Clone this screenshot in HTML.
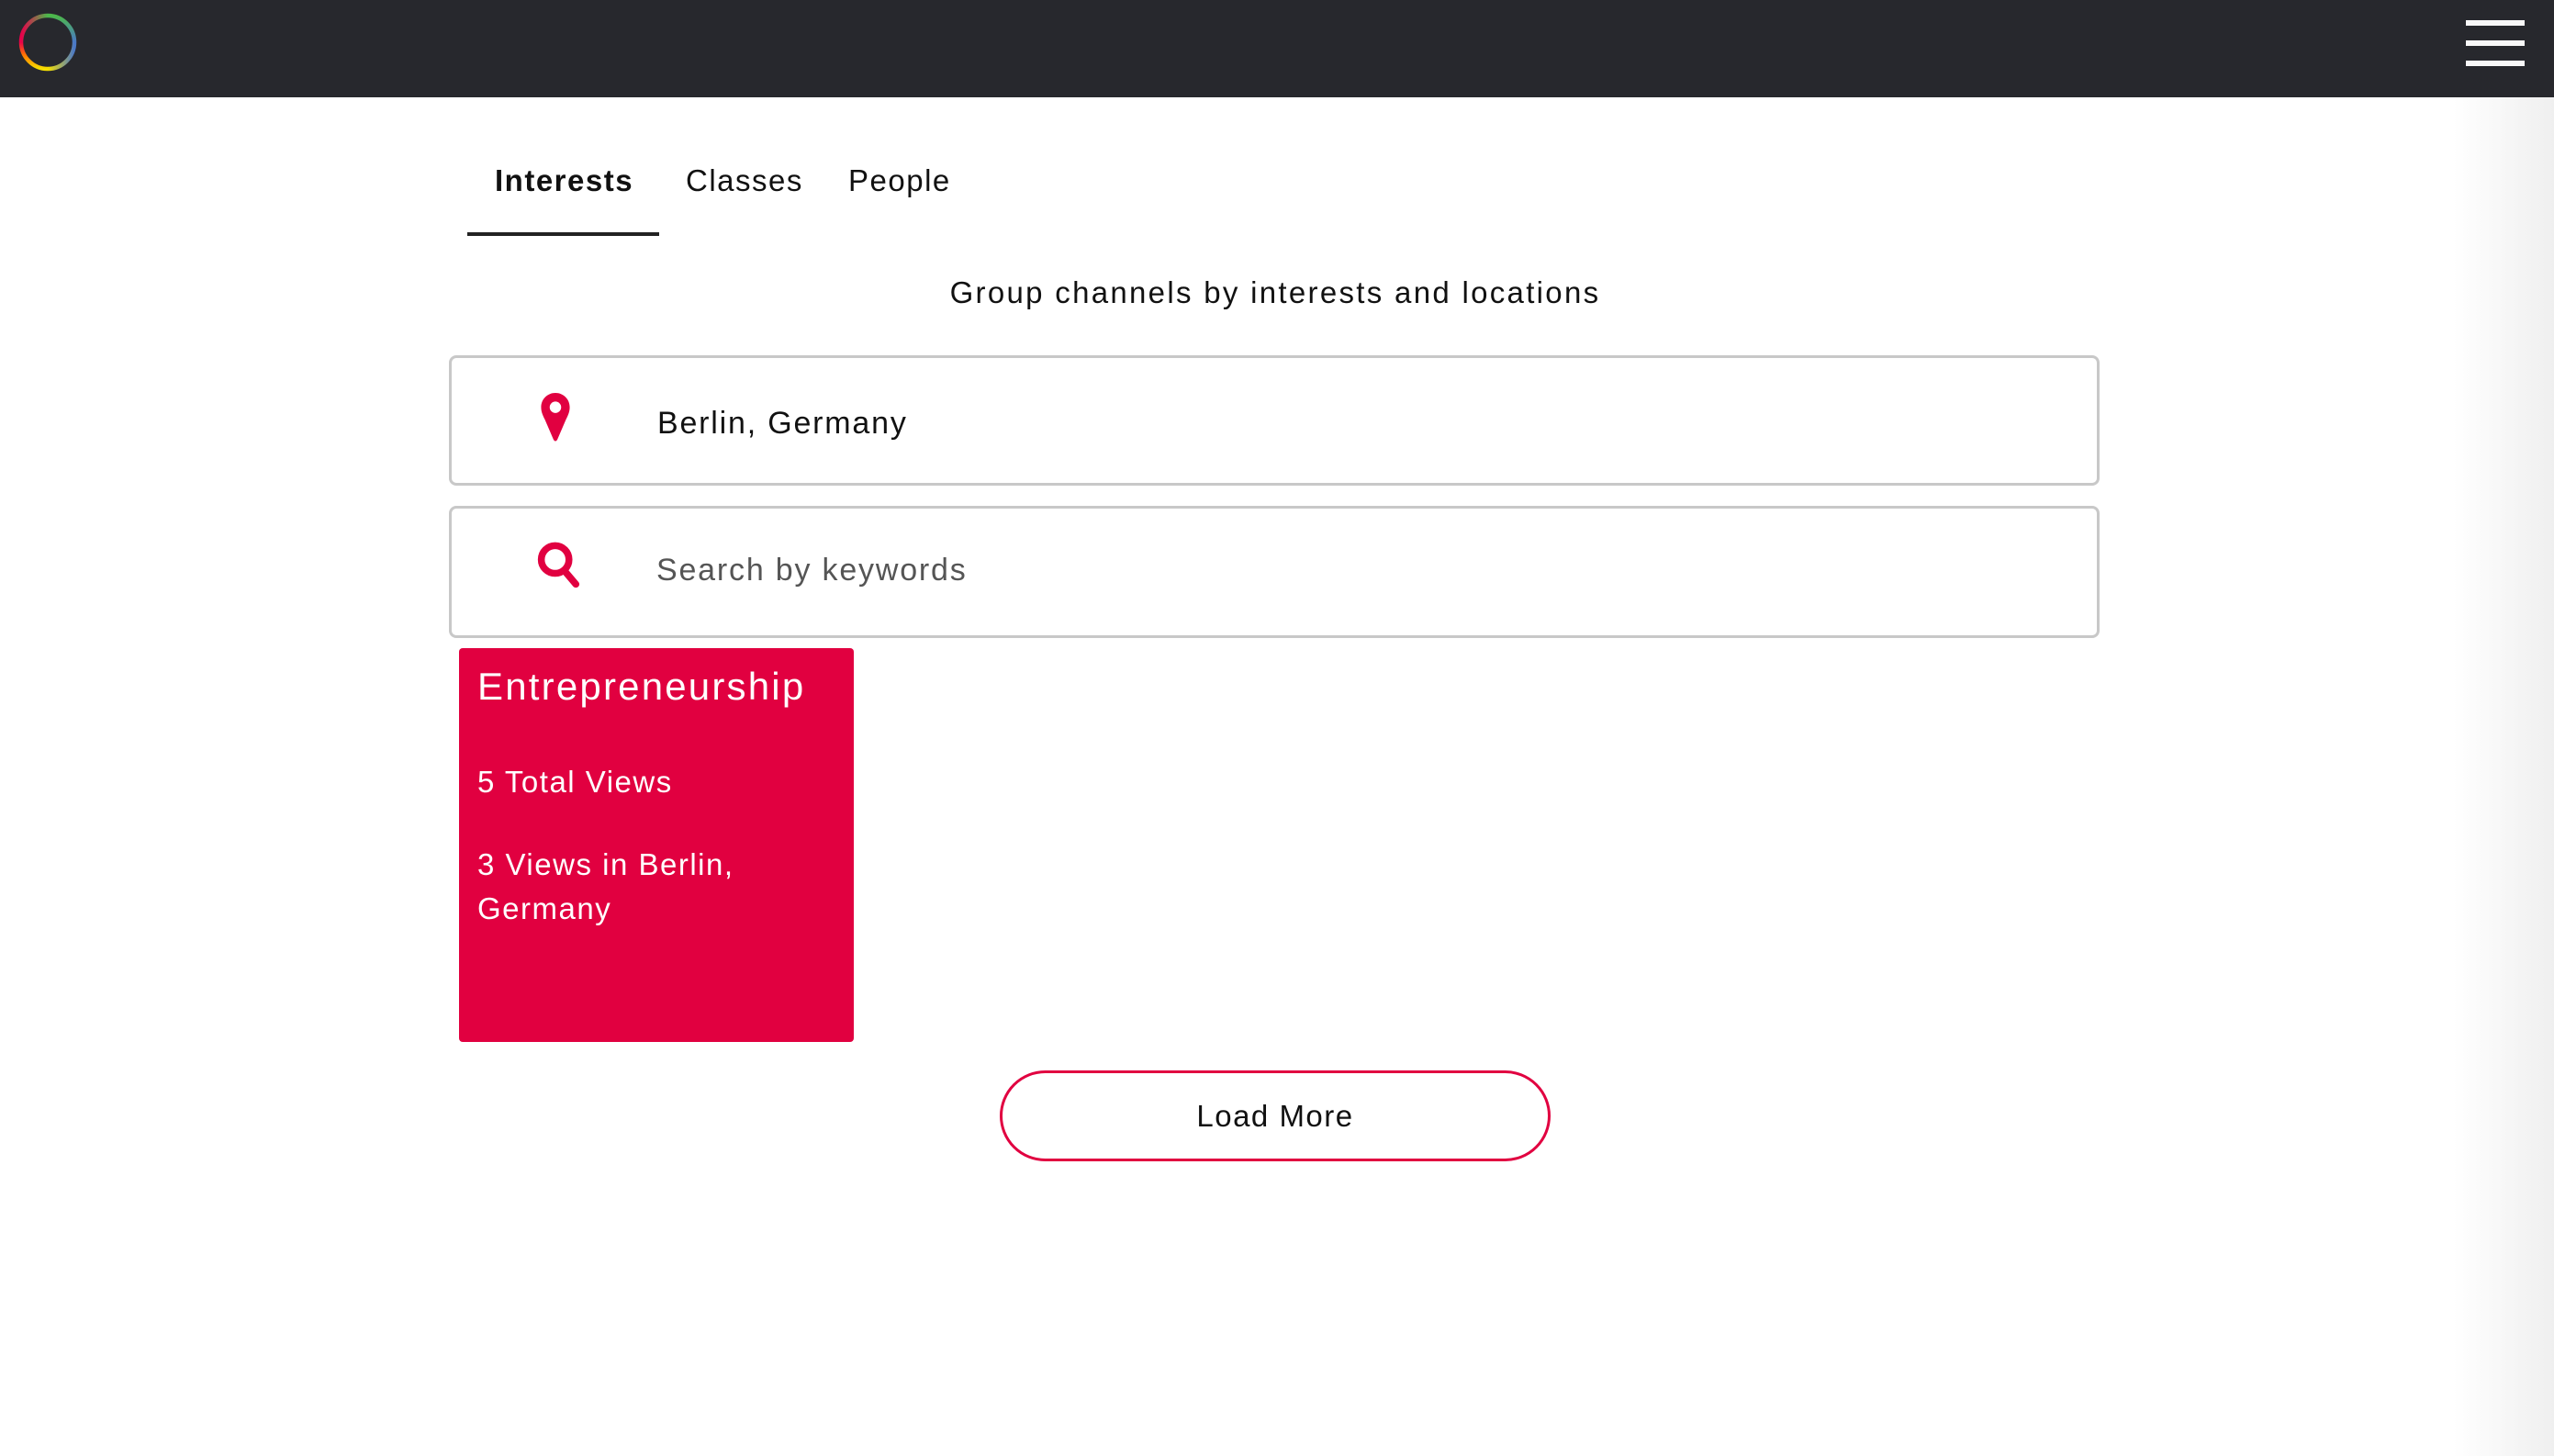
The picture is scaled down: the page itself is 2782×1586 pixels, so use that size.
<!DOCTYPE html>
<html><head><meta charset="utf-8"><style>
html,body{margin:0;padding:0;}
body{width:2782px;height:1586px;position:relative;overflow:hidden;background:#fff;font-family:"Liberation Sans",sans-serif;color:#111;}
.hdr{position:absolute;left:0;top:0;width:2782px;height:106px;background:#27282d;}
.bar{position:absolute;left:2686px;width:64px;height:6px;background:#f8f8f8;}
.shade{position:absolute;right:0;top:106px;width:110px;height:1480px;background:linear-gradient(to right,rgba(238,238,238,0),#efefef);}
.t{position:absolute;font-size:33px;white-space:nowrap;letter-spacing:1.5px;}
.box{position:absolute;left:489px;width:1798px;border:3px solid #c8c8c8;border-radius:8px;box-sizing:border-box;}
.card{position:absolute;left:500px;top:706px;width:430px;height:429px;background:#e10040;border-radius:4px;color:#fff;}
.btn{position:absolute;left:1089px;top:1166px;width:600px;height:99px;border:3px solid #e10040;border-radius:50px;box-sizing:border-box;text-align:center;line-height:93px;font-size:33px;letter-spacing:1.5px;}
</style></head><body>
<div class="hdr">
<svg style="position:absolute;left:20px;top:14px" width="64" height="64" viewBox="0 0 64 64">
<defs><linearGradient id="a" x1="0" y1="0" x2="1" y2="0"><stop offset="0" stop-color="#e8004a"/><stop offset="1" stop-color="#4cb84a"/></linearGradient>
<linearGradient id="b" x1="0" y1="0" x2="0" y2="1"><stop offset="0" stop-color="#4cb84a"/><stop offset="1" stop-color="#4a78c8"/></linearGradient>
<linearGradient id="c" x1="1" y1="0" x2="0" y2="0"><stop offset="0" stop-color="#4a78c8"/><stop offset="1" stop-color="#f6e000"/></linearGradient>
<linearGradient id="d" x1="0" y1="1" x2="0" y2="0"><stop offset="0" stop-color="#f6e000"/><stop offset="0.5" stop-color="#ff7a00"/><stop offset="1" stop-color="#e8004a"/></linearGradient></defs>
<g fill="none" stroke-width="4.5">
<path d="M32 3 A29 29 0 0 1 61 32" stroke="url(#b)"/>
<path d="M3 32 A29 29 0 0 1 32 3" stroke="url(#a)"/>
<path d="M61 32 A29 29 0 0 1 32 61" stroke="url(#c)"/>
<path d="M32 61 A29 29 0 0 1 3 32" stroke="url(#d)"/>
</g></svg>
<div class="bar" style="top:22px"></div><div class="bar" style="top:44px"></div><div class="bar" style="top:66px"></div>
</div>
<div class="shade"></div>
<div class="t" style="left:539px;top:178px;font-weight:bold">Interests</div>
<div class="t" style="left:747px;top:178px">Classes</div>
<div class="t" style="left:924px;top:178px">People</div>
<div style="position:absolute;left:509px;top:253px;width:209px;height:4px;background:#222"></div>
<div class="t" style="left:0;width:2778px;text-align:center;top:300px;font-size:33px;letter-spacing:2.3px">Group channels by interests and locations</div>
<div class="box" style="top:387px;height:142px"></div>
<svg style="position:absolute;left:588px;top:427px" width="34" height="54" viewBox="0 0 32 52"><path d="M16 1C7.7 1 1 7.5 1 16c0 5 2 9 4 13l9 21c1 2 3 2 4 0l9-21c2-4 4-8 4-13C31 7.5 24.3 1 16 1z" fill="#e10040"/><circle cx="16" cy="16" r="6" fill="#fff"/></svg>
<div class="t" style="left:716px;top:442px;font-size:34px;letter-spacing:1.8px">Berlin, Germany</div>
<div class="box" style="top:551px;height:144px"></div>
<svg style="position:absolute;left:584px;top:589px" width="50" height="56" viewBox="0 0 46 52"><circle cx="19" cy="19" r="14" fill="none" stroke="#e10040" stroke-width="7"/><path d="M29 31 L40 44" stroke="#e10040" stroke-width="7" stroke-linecap="round"/></svg>
<div class="t" style="left:715px;top:602px;font-size:34px;color:#555;letter-spacing:1.8px">Search by keywords</div>
<div class="card">
<div class="t" style="left:20px;top:18px;font-size:42px;letter-spacing:2.2px">Entrepreneurship</div>
<div class="t" style="left:20px;top:127px">5 Total Views</div>
<div class="t" style="left:20px;top:212px;line-height:48px;white-space:normal;width:380px">3 Views in Berlin, Germany</div>
</div>
<div class="btn">Load More</div>
</body></html>
